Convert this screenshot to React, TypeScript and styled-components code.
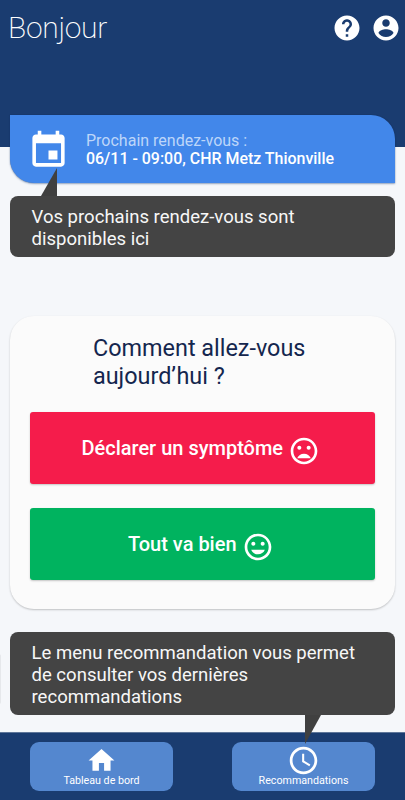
import React from "react";
import styled, { createGlobalStyle } from "styled-components";

const GlobalStyle = createGlobalStyle`
  * { box-sizing: border-box; }
  body { margin: 0; background: #f5f7fa; font-family: Roboto, "Liberation Sans", sans-serif; overflow: hidden; }
  h1, h2, p { margin: 0; font-weight: 400; }
  button { font-family: inherit; border: 0; padding: 0; color: #fff; cursor: pointer; }
`;

const Screen = styled.div`
  width: 405px;
  height: 800px;
  display: flex;
  flex-direction: column;
  overflow: hidden;
  background: #f5f7fa;
`;

const Header = styled.header`
  height: 147px;
  flex: none;
  display: flex;
  justify-content: space-between;
  align-items: flex-start;
  padding: 9px 4.5px 0 8px;
  background: #1a3c70;
  color: #fff;
`;

const Title = styled.h1`
  font-size: 30px;
  line-height: 38px;
  font-weight: 200;
  letter-spacing: -0.3px;
`;

const HeaderActions = styled.div`
  display: flex;
  gap: 9px;
  padding-top: 3.5px;
`;

const Icon = styled.svg<{ $size: number }>`
  display: block;
  flex: none;
  width: ${(p) => p.$size}px;
  height: ${(p) => p.$size}px;
  fill: currentColor;
`;

const Main = styled.main`
  position: relative;
  z-index: 1;
  flex: 1;
  display: flex;
  flex-direction: column;
  padding: 0 10px;
  margin-top: -32px;
`;

const Appointment = styled.section`
  height: 68px;
  flex: none;
  display: flex;
  align-items: flex-start;
  gap: 16.5px;
  padding: 14px 0 0 16.5px;
  border-radius: 0 24px 0 24px;
  background: #4287ea;
  color: #fff;
  box-shadow: 0 1px 2px rgba(20, 60, 120, 0.4), 0 0 1px rgba(10, 25, 60, 0.5);
`;

const AppointmentText = styled.div`
  padding-top: 3px;
`;

const AppointmentLabel = styled.p`
  font-size: 16px;
  line-height: 18px;
  color: #bdd6f9;
`;

const AppointmentValue = styled.p`
  font-size: 15.95px;
  line-height: 18px;
  font-weight: 500;
`;

const Callout = styled.aside<{ $top: number; $height: number }>`
  position: relative;
  flex: none;
  margin-top: ${(p) => p.$top}px;
  height: ${(p) => p.$height}px;
  padding: 9.5px 21.5px;
  border-radius: 8px;
  background: #444;
  color: #f7f7f7;
  font-size: 18.55px;
  line-height: 22px;
  white-space: nowrap;
`;

const Tail = styled.span<{ $up?: boolean }>`
  position: absolute;
  z-index: 1;
  background: #404040;
  ${(p) =>
    p.$up
      ? "left: 31px; bottom: 100%; width: 16px; height: 28px; clip-path: polygon(100% 0, 100% 100%, 0 100%);"
      : "left: 295px; top: 100%; width: 16px; height: 29px; clip-path: polygon(0 0, 100% 0, 0 100%);"}
`;

const MoodCard = styled.section`
  height: 293px;
  flex: none;
  margin-top: 59px;
  padding: 18px 20px 0;
  border-radius: 24px;
  background: #fbfbfb;
  box-shadow: 0 1px 2px rgba(0, 0, 0, 0.22);
`;

const Question = styled.h2`
  padding-left: 63px;
  font-size: 23.4px;
  line-height: 28px;
  color: #14264e;
  white-space: nowrap;
`;

const MoodButton = styled.button<{ $color: string }>`
  width: 345px;
  height: 72px;
  display: flex;
  align-items: center;
  justify-content: center;
  gap: 5px;
  margin-top: 21.7px;
  padding-right: 3.5px;
  border-radius: 3px;
  background: ${(p) => p.$color};
  font-size: 20px;
  font-weight: 500;
  box-shadow: 0 1px 2px rgba(0, 0, 0, 0.22);

  & > svg { margin-top: 6px; }
  & + & { margin-top: 24px; }
`;

const EdgeHint = styled.i`
  position: absolute;
  left: -11px;
  top: 22px;
  width: 2px;
  height: 50px;
  border-radius: 0 2px 2px 0;
  background: #e6e8eb;
`;

const BottomNav = styled.nav`
  height: 68px;
  flex: none;
  display: flex;
  justify-content: space-between;
  padding: 9px 30px 0;
  border-top: 1px solid #5e7699;
  background: #1a3c70;
`;

const NavItem = styled.button`
  width: 143px;
  height: 49px;
  display: flex;
  flex-direction: column;
  align-items: center;
  border-radius: 9px;
  background: #5487cf;
  font-size: 10.7px;
`;

const NavIcon = styled.span`
  height: 32px;
  display: flex;
  align-items: center;
  padding-top: 4px;
`;

const paths = {
  help: "M12 2C6.48 2 2 6.48 2 12s4.48 10 10 10 10-4.48 10-10S17.52 2 12 2zm1 17h-2v-2h2v2zm2.07-7.75l-.9.92C13.45 12.9 13 13.5 13 15h-2v-.5c0-1.1.45-2.1 1.17-2.83l1.24-1.26c.37-.36.59-.86.59-1.41 0-1.1-.9-2-2-2s-2 .9-2 2H8c0-2.21 1.79-4 4-4s4 1.79 4 4c0 .88-.36 1.68-.93 2.25z",
  account: "M12 2C6.48 2 2 6.48 2 12s4.48 10 10 10 10-4.48 10-10S17.52 2 12 2zm0 3c1.66 0 3 1.34 3 3s-1.34 3-3 3-3-1.34-3-3 1.34-3 3-3zm0 14.2c-2.5 0-4.71-1.28-6-3.22.03-1.99 4-3.08 6-3.08 1.99 0 5.97 1.09 6 3.08-1.29 1.94-3.5 3.22-6 3.22z",
  event: "M17 12h-5v5h5v-5zM16 1v2H8V1H6v2H5c-1.11 0-1.99.9-1.99 2L3 19c0 1.1.89 2 2 2h14c1.1 0 2-.9 2-2V5c0-1.1-.9-2-2-2h-1V1h-2zm3 18H5V8h14v11z",
  home: "M10 20v-6h4v6h5v-8h3L12 3 2 12h3v8z",
  clock: "M11.99 2C6.47 2 2 6.48 2 12s4.47 10 9.99 10C17.52 22 22 17.52 22 12S17.52 2 11.99 2zM12 20c-4.42 0-8-3.58-8-8s3.58-8 8-8 8 3.58 8 8-3.58 8-8 8zm.5-13H11v6l5.25 3.15.75-1.23-4.5-2.67z",
  sad: "M11.99 2C6.47 2 2 6.48 2 12s4.47 10 9.99 10C17.52 22 22 17.52 22 12S17.52 2 11.99 2zM12 20c-4.42 0-8-3.58-8-8s3.58-8 8-8 8 3.58 8 8-3.58 8-8 8zm3.5-9c.83 0 1.5-.67 1.5-1.5S16.33 8 15.5 8 14 8.67 14 9.5s.67 1.5 1.5 1.5zm-7 0c.83 0 1.5-.67 1.5-1.5S9.33 8 8.5 8 7 8.67 7 9.5 7.67 11 8.5 11zm3.5 3c-2.33 0-4.31 1.46-5.11 3.5h10.22c-.8-2.04-2.78-3.5-5.11-3.5z",
  happy: "M11.99 2C6.47 2 2 6.48 2 12s4.47 10 9.99 10C17.52 22 22 17.52 22 12S17.52 2 11.99 2zM12 20c-4.42 0-8-3.58-8-8s3.58-8 8-8 8 3.58 8 8-3.58 8-8 8zm3.5-9c.83 0 1.5-.67 1.5-1.5S16.33 8 15.5 8 14 8.67 14 9.5s.67 1.5 1.5 1.5zm-7 0c.83 0 1.5-.67 1.5-1.5S9.33 8 8.5 8 7 8.67 7 9.5 7.67 11 8.5 11zm3.5 6.5c2.33 0 4.31-1.46 5.11-3.5H6.89c.8 2.04 2.78 3.5 5.11 3.5z",
};

const Glyph = ({ name, size }: { name: keyof typeof paths; size: number }) => (
  <Icon $size={size} viewBox="0 0 24 24" aria-hidden="true">
    <path d={paths[name]} />
  </Icon>
);

export default function App() {
  return (
    <Screen>
      <GlobalStyle />
      <Header>
        <Title>Bonjour</Title>
        <HeaderActions>
          <Glyph name="help" size={30} />
          <Glyph name="account" size={30} />
        </HeaderActions>
      </Header>
      <Main>
        <Appointment>
          <Glyph name="event" size={43} />
          <AppointmentText>
            <AppointmentLabel>Prochain rendez-vous :</AppointmentLabel>
            <AppointmentValue>06/11 - 09:00, CHR Metz Thionville</AppointmentValue>
          </AppointmentText>
        </Appointment>
        <Callout $top={13} $height={61}>
          <Tail $up />
          Vos prochains rendez-vous sont
          <br />
          disponibles ici
        </Callout>
        <MoodCard>
          <Question>
            Comment allez-vous
            <br />
            aujourd’hui ?
          </Question>
          <MoodButton $color="#f51c4b">
            Déclarer un symptôme
            <Glyph name="sad" size={32} />
          </MoodButton>
          <MoodButton $color="#00b35f">
            Tout va bien
            <Glyph name="happy" size={32} />
          </MoodButton>
        </MoodCard>
        <Callout $top={23} $height={83}>
          <EdgeHint />
          Le menu recommandation vous permet
          <br />
          de consulter vos dernières
          <br />
          recommandations
          <Tail />
        </Callout>
      </Main>
      <BottomNav>
        <NavItem>
          <NavIcon>
            <Glyph name="home" size={31} />
          </NavIcon>
          Tableau de bord
        </NavItem>
        <NavItem>
          <NavIcon>
            <Glyph name="clock" size={33} />
          </NavIcon>
          Recommandations
        </NavItem>
      </BottomNav>
    </Screen>
  );
}
